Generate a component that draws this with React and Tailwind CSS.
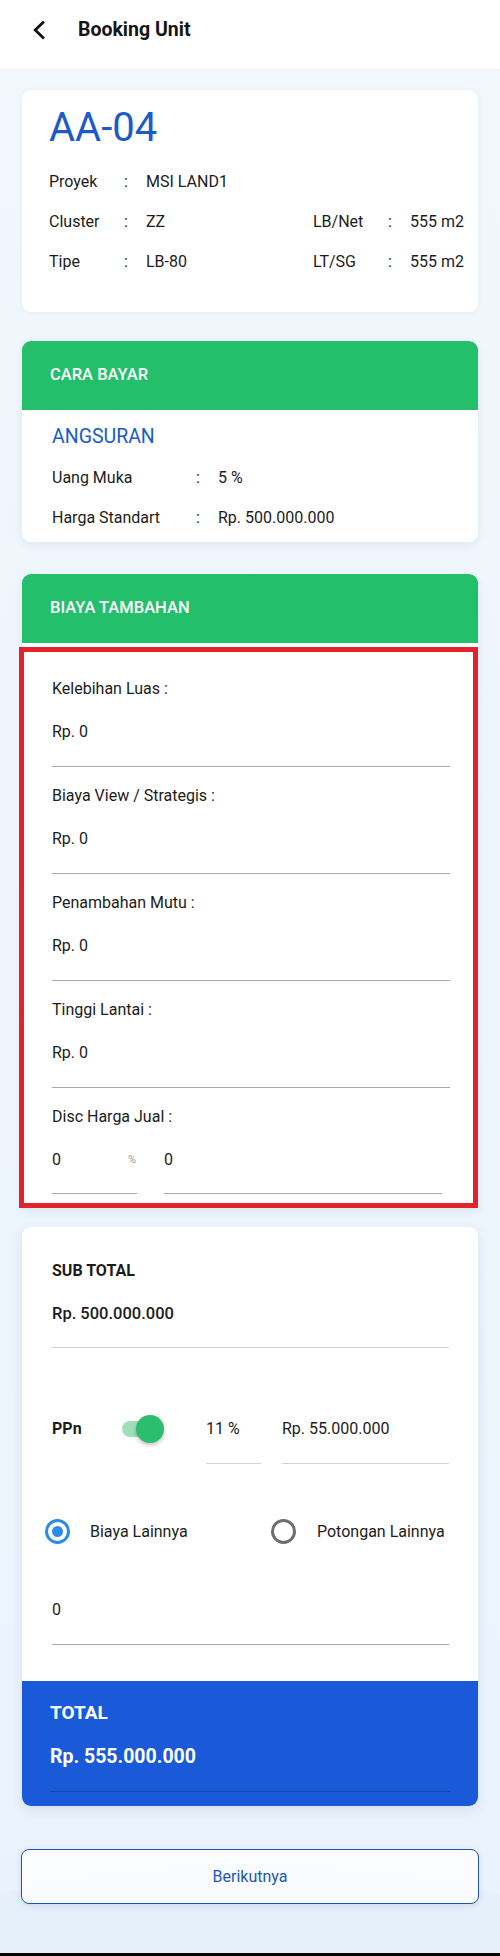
import React from "react";

function InfoRow({ label, value, labelW }) {
  return (
    <div className="flex items-center h-[40px]">
      <span className={labelW}>{label}</span>
      <span className="w-[22px]">:</span>
      <span>{value}</span>
    </div>
  );
}

function Field({ label, last }) {
  return (
    <div className={last ? "" : "mb-[19px]"}>
      <div className="leading-[20px] h-[20px]">{label}</div>
      <div className="mt-[23px] leading-[20px] h-[20px] pb-[24px] box-content border-b border-[#a9a9a9] w-[398px]">
        Rp. 0
      </div>
    </div>
  );
}

export default function App() {
  return (
    <div className="w-[500px] font-['Roboto',sans-serif] text-[16px] text-[#1c1c1c]">
      {/* Header */}
      <div className="h-[69px] pb-[9px] bg-white flex items-center">
        <svg className="ml-[31px]" width="16" height="20" viewBox="0 0 16 20">
          <path d="M12 2.5 L4.2 10 L12 17.5" fill="none" stroke="#111" strokeWidth="2.7" strokeLinecap="square" />
        </svg>
        <span className="ml-[31px] text-[19.5px] leading-[24px] font-bold text-[#151515]">Booking Unit</span>
      </div>

      {/* Main */}
      <div className="relative overflow-hidden bg-gradient-to-b from-[#f1f7fd] to-[#eaf3fc] px-[22px] pt-[21px] pb-[49px]">
        {/* Card 1 */}
        <div className="relative bg-white rounded-[9px] shadow-[0_1px_6px_rgba(30,60,120,0.05)] pl-[27px] pr-[12px] pt-[14px] pb-[30px]">
          <div className="text-[40px] leading-[47px] text-[#1b5bc9]">AA-04</div>
          <div className="mt-[11px]">
            <InfoRow label="Proyek" value="MSI LAND1" labelW="w-[75px]" />
            <div className="flex">
              <div className="w-[264px]">
                <InfoRow label="Cluster" value="ZZ" labelW="w-[75px]" />
                <InfoRow label="Tipe" value="LB-80" labelW="w-[75px]" />
              </div>
              <div>
                <InfoRow label="LB/Net" value="555 m2" labelW="w-[75px]" />
                <InfoRow label="LT/SG" value="555 m2" labelW="w-[75px]" />
              </div>
            </div>
          </div>
        </div>

        {/* Card 2: Cara Bayar */}
        <div className="relative mt-[29px] bg-white rounded-[9px] shadow-[0_3px_10px_rgba(30,60,120,0.08)]">
          <div className="h-[69px] bg-[#23bf6b] rounded-t-[9px] flex items-center pl-[28px] text-white font-medium text-[16.5px]">
            CARA BAYAR
          </div>
          <div className="pl-[30px] pt-[13px] pb-[4px]">
            <div className="text-[19.5px] leading-[28px] text-[#1b5bc9]">ANGSURAN</div>
            <div className="mt-[7px]">
              <InfoRow label="Uang Muka" value="5 %" labelW="w-[144px]" />
              <InfoRow label="Harga Standart" value="Rp. 500.000.000" labelW="w-[144px]" />
            </div>
          </div>
        </div>

        {/* Card 3: Biaya Tambahan */}
        <div className="relative mt-[32px] bg-white rounded-t-[9px] shadow-[0_3px_10px_rgba(30,60,120,0.08)]">
          <div className="h-[69px] bg-[#23bf6b] rounded-t-[9px] flex items-center pl-[28px] text-white font-medium text-[16.5px]">
            BIAYA TAMBAHAN
          </div>
          <div className="pt-[4px]">
            <div className="-ml-[3px] border-[5px] border-[#e3222b] bg-white pl-[28px] pt-[27px] pb-[9px]">
              <Field label="Kelebihan Luas :" />
              <Field label="Biaya View / Strategis :" />
              <Field label="Penambahan Mutu :" />
              <Field label="Tinggi Lantai :" />
              <div>
                <div className="leading-[20px] h-[20px]">Disc Harga Jual :</div>
                <div className="mt-[23px] flex">
                  <div className="w-[84px] h-[20px] pb-[23px] box-content border-b border-[#a9a9a9] flex items-center justify-between pr-[1px]">
                    <span className="leading-[20px]">0</span>
                    <span className="text-[11px] text-[#9a9a9a]">%</span>
                  </div>
                  <div className="ml-[27px] w-[278px] h-[20px] pb-[23px] box-content border-b border-[#a9a9a9] leading-[20px]">
                    0
                  </div>
                </div>
              </div>
            </div>
          </div>
        </div>

        {/* Card 4: Sub total */}
        <div className="relative mt-[19px] rounded-[9px] shadow-[0_4px_12px_rgba(30,60,120,0.10)]">
          <div className="bg-white rounded-t-[9px] pl-[30px] pr-[29px] pt-[34px] pb-[36px]">
            <div className="leading-[20px] font-bold">SUB TOTAL</div>
            <div className="mt-[23px] leading-[20px] h-[20px] pb-[23px] box-content border-b border-[#d3d3d3] font-medium text-[16.5px]">
              Rp. 500.000.000
            </div>

            <div className="mt-[71px] flex items-start">
              <div className="w-[70px] leading-[20px] font-bold">PPn</div>
              <div className="h-[20px] flex items-center">
                <div className="relative w-[38px] h-[16px] rounded-full bg-[#9fe0bb]">
                  <div className="absolute -right-[4px] -top-[6px] w-[28px] h-[28px] rounded-full bg-[#2dbd6e] shadow-[0_2px_4px_rgba(0,0,0,0.25)]" />
                </div>
              </div>
              <div className="ml-[46px] w-[55px] h-[20px] pb-[24px] box-content border-b border-[#d3d3d3] leading-[20px]">
                11 %
              </div>
              <div className="ml-[21px] w-[167px] h-[20px] pb-[24px] box-content border-b border-[#d3d3d3] leading-[20px]">
                Rp. 55.000.000
              </div>
            </div>

            <div className="mt-[55px] flex items-center h-[25px] -ml-[7px]">
              <div className="w-[25px] h-[25px] rounded-full border-[3px] border-[#2b8ce6] flex items-center justify-center">
                <div className="w-[11px] h-[11px] rounded-full bg-[#2b8ce6]" />
              </div>
              <span className="ml-[20px] w-[181px]">Biaya Lainnya</span>
              <div className="w-[25px] h-[25px] rounded-full border-[3px] border-[#6e6e6e]" />
              <span className="ml-[21px]">Potongan Lainnya</span>
            </div>

            <div className="mt-[56px] h-[20px] leading-[20px] pb-[24px] box-content border-b border-[#a9a9a9]">
              0
            </div>
          </div>
          <div className="bg-[#1a5ad8] rounded-b-[9px] pl-[28px] pr-[28px] pt-[20px] pb-[14px] text-white">
            <div className="text-[19px] leading-[24px] font-bold">TOTAL</div>
            <div className="mt-[18px] text-[19.5px] leading-[28px] font-bold pb-[20px] border-b border-[#1447b5]">
              Rp. 555.000.000
            </div>
          </div>
        </div>

        {/* Decorative wave */}
        <div className="absolute left-[-260px] top-[1799px] w-[1020px] h-[400px] rounded-[50%] bg-[#e6f0fb]" />

        {/* Button */}
        <div className="relative mt-[43px] -mx-px h-[55px] rounded-[8px] border-[1.5px] border-[#1e52ad] bg-white/75 shadow-[0_2px_6px_rgba(30,60,120,0.12)] flex items-center justify-center text-[#2257b2]">
          Berikutnya
        </div>
      </div>
      <div className="h-[3px] bg-black" />
    </div>
  );
}
